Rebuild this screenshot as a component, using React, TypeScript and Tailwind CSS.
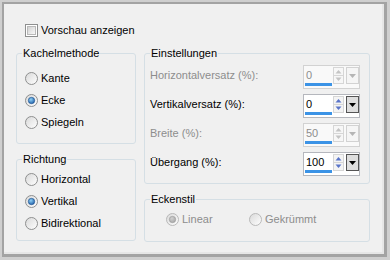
import React from 'react';

const font = { fontFamily: '"Liberation Sans", Arial, sans-serif' };

function Radio({ label, checked, disabled, className }: { label: string; checked?: boolean; disabled?: boolean; className?: string }) {
  const ring = disabled ? '#b8b8b8' : '#8e8f8f';
  const dot = disabled ? '#a6a6a6' : '#1f5fa8';
  return (
    <div className={`flex h-[22px] items-center ${className ?? ''}`}>
      <svg width="13" height="13" viewBox="0 0 13 13" className="shrink-0">
        <defs>
          <linearGradient id={`rg-${label}`} x1="0" y1="0" x2="1" y2="1">
            <stop offset="0" stopColor="#d8d8d8" />
            <stop offset="1" stopColor="#ffffff" />
          </linearGradient>
          <radialGradient id={`rd-${label}`} cx="0.4" cy="0.35" r="0.7">
            <stop offset="0" stopColor={disabled ? '#d0d0d0' : '#8fd0f5'} />
            <stop offset="1" stopColor={dot} />
          </radialGradient>
        </defs>
        <circle cx="6.5" cy="6.5" r="6" fill={`url(#rg-${label})`} stroke={ring} />
        {checked && (
          <circle cx="6.5" cy="6.5" r="3.2" fill={`url(#rd-${label})`} stroke={disabled ? '#9a9a9a' : '#1b4e8c'} strokeWidth="0.6" />
        )}
      </svg>
      <span className={`ml-[3px] text-[11px] leading-[15px] ${disabled ? 'text-[#8d8d8d]' : 'text-black'}`}>{label}</span>
    </div>
  );
}

function Group({ title, className, children }: { title: string; className?: string; children: React.ReactNode }) {
  return (
    <fieldset className={`rounded-[3px] border border-[#d5dfe5] ${className ?? ''}`}>
      <legend className="ml-[5px] px-[1px] text-[11px] leading-[15px] text-black">{title}</legend>
      {children}
    </fieldset>
  );
}

function Spin({ value, enabled }: { value: string; enabled?: boolean }) {
  const arrow = enabled ? '#5a74c8' : '#c4c4c4';
  return (
    <div className={`flex h-[24px] w-[57px] border ${enabled ? 'border-[#b5b7bd] bg-white' : 'border-[#d2d2d2] bg-[#f9f9f9]'}`}>
      <div className="flex w-[29px] flex-col">
        <div className={`flex-1 pl-[2px] pt-[2px] text-[11px] leading-[15px] ${enabled ? 'text-black' : 'text-[#8d8d8d]'}`}>{value}</div>
        <div className="mb-[2px] ml-[1px] h-[3px] w-[27px] bg-[#3b93e6]" />
      </div>
      <svg width="11" height="17" viewBox="0 0 11 17" className="ml-[1px] mt-[1px] shrink-0">
        <rect x="0.5" y="0.5" width="10" height="16" fill={enabled ? '#f4f4f4' : '#f7f7f7'} stroke="#d6d6d6" />
        <line x1="1" y1="8.5" x2="10" y2="8.5" stroke="#d6d6d6" />
        <path d="M2.5 6.5 L5.5 3 L8.5 6.5 Z" fill={arrow} />
        <path d="M2.5 10.5 L5.5 14 L8.5 10.5 Z" fill={arrow} />
      </svg>
      <div
        className={`ml-[2px] mt-[1px] flex h-[17px] w-[13px] shrink-0 items-center justify-center border ${
          enabled ? 'border-[#555555] bg-[#dedede]' : 'border-[#d2d2d2] bg-[#f5f5f5]'
        }`}
      >
        <svg width="7" height="4" viewBox="0 0 7 4">
          <path d="M0 0 L7 0 L3.5 4 Z" fill={enabled ? '#000000' : '#b5b5b5'} />
        </svg>
      </div>
    </div>
  );
}

const settings = [
  { label: 'Horizontalversatz (%):', value: '0', enabled: false },
  { label: 'Vertikalversatz (%):', value: '0', enabled: true },
  { label: 'Breite (%):', value: '50', enabled: false },
  { label: 'Übergang (%):', value: '100', enabled: true },
];

export default function App() {
  return (
    <div className="h-[260px] w-[390px] bg-[#cfcfcf] pb-[3px] pl-[2px] pr-[3px] pt-[2px]" style={font}>
      <div className="h-full border-b-[3px] border-l-2 border-r-[3px] border-t-2 border-[#a3a3a3]">
        <div className="flex h-full flex-col border-b-2 border-r-2 border-[#e6e6e6] bg-[#f0f0f0] pl-[12px] pr-[10px] pt-[18px]">
          <label className="ml-[9px] flex h-[17px] items-center">
            <svg width="13" height="13" viewBox="0 0 13 13" className="shrink-0">
              <defs>
                <linearGradient id="cb" x1="0" y1="0" x2="1" y2="1">
                  <stop offset="0" stopColor="#cfcfcf" />
                  <stop offset="1" stopColor="#fbfbfb" />
                </linearGradient>
              </defs>
              <rect x="0.5" y="0.5" width="12" height="12" fill="#ffffff" stroke="#8e8f8f" />
              <rect x="2.5" y="2.5" width="8" height="8" fill="url(#cb)" stroke="#b9b9b9" />
            </svg>
            <span className="ml-[3px] text-[11px] leading-[15px] text-black">Vorschau anzeigen</span>
          </label>

          <div className="mt-[7px] flex gap-[8px]">
            <div className="flex w-[120px] flex-col">
              <Group title="Kachelmethode" className="h-[98px]">
                <div className="pl-[8px] pt-[6px]">
                  <Radio label="Kante" />
                  <Radio label="Ecke" checked />
                  <Radio label="Spiegeln" />
                </div>
              </Group>
              <Group title="Richtung" className="mt-[8px] h-[89px]">
                <div className="pl-[8px] pt-[1px]">
                  <Radio label="Horizontal" />
                  <Radio label="Vertikal" checked />
                  <Radio label="Bidirektional" />
                </div>
              </Group>
            </div>

            <div className="flex w-[226px] flex-col">
              <Group title="Einstellungen" className="h-[138px]">
                <div className="flex flex-col gap-[5px] pl-[5px] pr-[9px] pt-[4px]">
                  {settings.map((s) => (
                    <div key={s.label} className="flex items-start justify-between">
                      <span className={`pt-[3px] text-[11px] leading-[15px] ${s.enabled ? 'text-black' : 'text-[#8d8d8d]'}`}>{s.label}</span>
                      <Spin value={s.value} enabled={s.enabled} />
                    </div>
                  ))}
                </div>
              </Group>
              <Group title="Eckenstil" className="mt-[8px] h-[50px]">
                <div className="flex pl-[21px] pt-[1px]">
                  <Radio label="Linear" checked disabled className="w-[83px]" />
                  <Radio label="Gekrümmt" disabled />
                </div>
              </Group>
            </div>
          </div>
        </div>
      </div>
    </div>
  );
}
